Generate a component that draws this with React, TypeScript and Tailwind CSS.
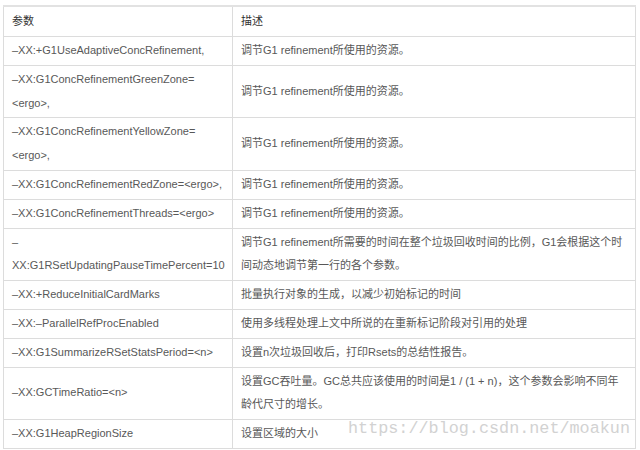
const rows: { param: React.ReactNode; desc: React.ReactNode }[] = [
  { param: "–XX:+G1UseAdaptiveConcRefinement,", desc: "调节G1 refinement所使用的资源。" },
  { param: <>–XX:G1ConcRefinementGreenZone=<br />&lt;ergo&gt;,</>, desc: "调节G1 refinement所使用的资源。" },
  { param: <>–XX:G1ConcRefinementYellowZone=<br />&lt;ergo&gt;,</>, desc: "调节G1 refinement所使用的资源。" },
  { param: "–XX:G1ConcRefinementRedZone=<ergo>,", desc: "调节G1 refinement所使用的资源。" },
  { param: "–XX:G1ConcRefinementThreads=<ergo>", desc: "调节G1 refinement所使用的资源。" },
  {
    param: <>–<br />XX:G1RSetUpdatingPauseTimePercent=10</>,
    desc: <>调节G1 refinement所需要的时间在整个垃圾回收时间的比例，G1会根据这个时<br />间动态地调节第一行的各个参数。</>,
  },
  { param: "–XX:+ReduceInitialCardMarks", desc: "批量执行对象的生成，以减少初始标记的时间" },
  { param: "–XX:–ParallelRefProcEnabled", desc: "使用多线程处理上文中所说的在重新标记阶段对引用的处理" },
  { param: "–XX:G1SummarizeRSetStatsPeriod=<n>", desc: "设置n次垃圾回收后，打印Rsets的总结性报告。" },
  {
    param: "–XX:GCTimeRatio=<n>",
    desc: <>设置GC吞吐量。GC总共应该使用的时间是1 / (1 + n)，这个参数会影响不同年<br />龄代尺寸的增长。</>,
  },
  { param: "–XX:G1HeapRegionSize", desc: "设置区域的大小" },
]

export default function App() {
  return (
    <div
      className="relative w-[640px] h-[450px] bg-white overflow-hidden pt-[5px] pl-[3px]"
      style={{ fontFamily: '"Liberation Sans", "Noto Sans CJK SC", sans-serif' }}
    >
      <table className="table-fixed border-collapse w-[633px] text-[11px] text-[#585858]">
        <colgroup>
          <col className="w-[229px]" />
          <col />
        </colgroup>
        <thead>
          <tr className="border-t-2 border-[#e2e2e2]">
            <th className="border border-[#dcdcdc] px-[8px] py-[3px] leading-[23px] text-left font-normal text-[#333]">参数</th>
            <th className="border border-[#dcdcdc] px-[8px] py-[3px] leading-[23px] text-left font-normal text-[#333]">描述</th>
          </tr>
        </thead>
        <tbody>
          {rows.map((r, i) => (
            <tr key={i}>
              <td className="border border-[#dcdcdc] px-[8px] py-[2px] leading-[23.8px] align-middle whitespace-nowrap">{r.param}</td>
              <td className="border border-[#dcdcdc] px-[8px] py-[2px] leading-[23.8px] align-middle whitespace-nowrap">{r.desc}</td>
            </tr>
          ))}
        </tbody>
      </table>
      <div
        className="absolute left-[348px] top-[419px] text-[16.8px] leading-[20px] text-[#d2d2d2]"
        style={{ fontFamily: '"Liberation Mono", monospace' }}
      >
        https://blog.csdn.net/moakun
      </div>
    </div>
  )
}
